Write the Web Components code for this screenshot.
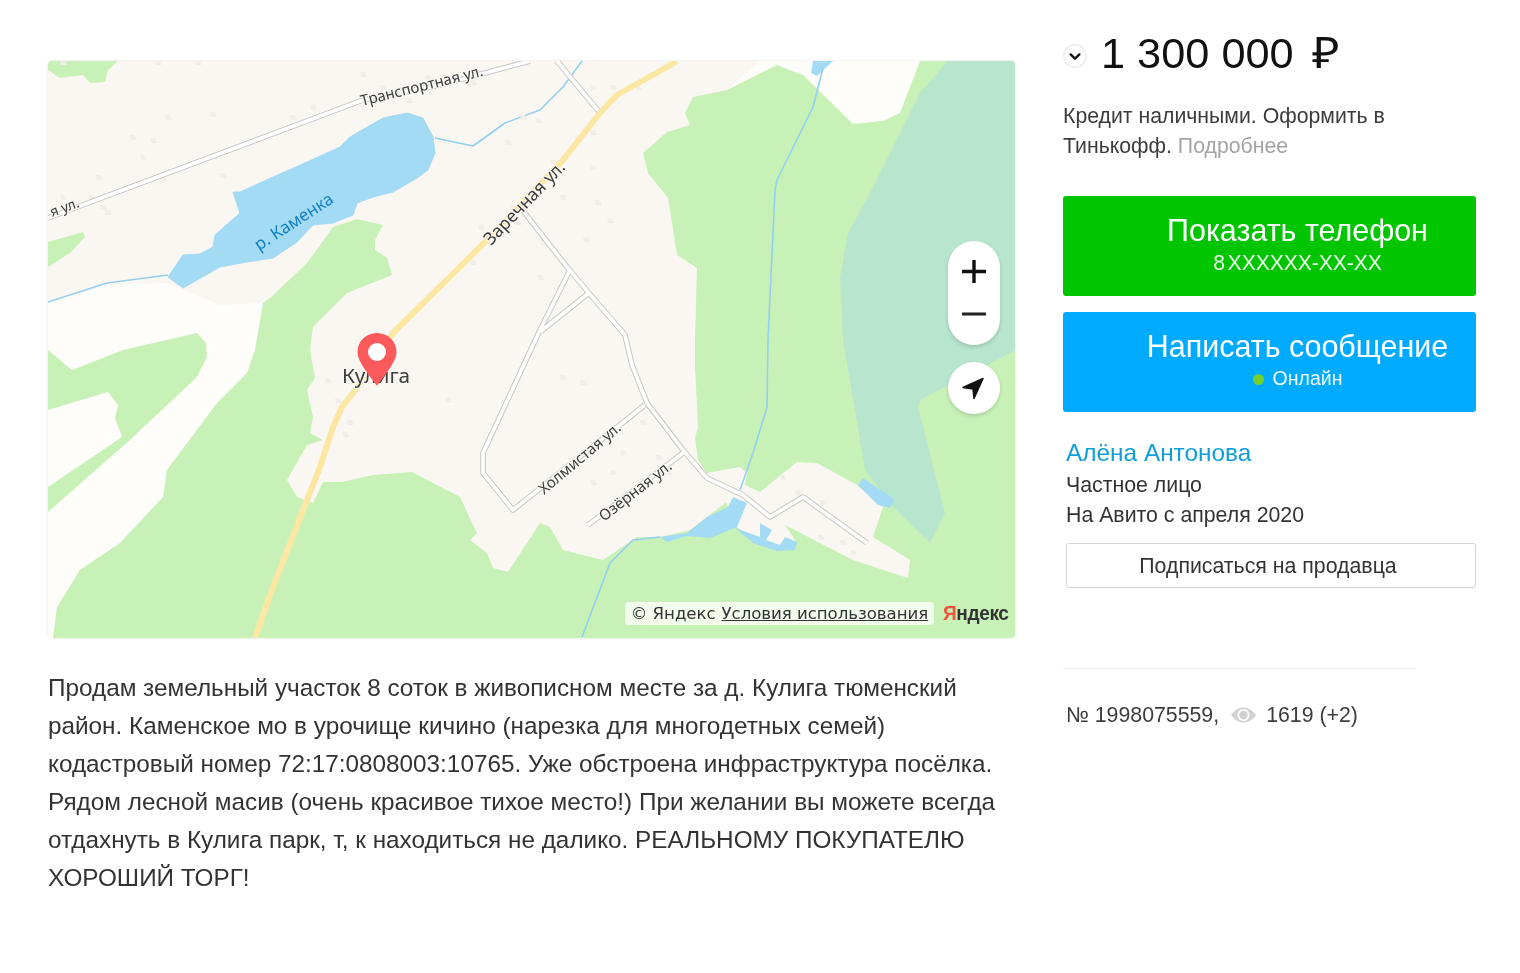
<!DOCTYPE html>
<html lang="ru"><head><meta charset="utf-8"><title>Объявление</title>
<style>html,body{margin:0;background:#fff}body{font-family:"Liberation Sans",Arial,sans-serif}</style>
</head><body>
<ad-page>
  <ad-map slot="map"></ad-map>
  <ad-desc slot="desc">Продам земельный участок 8 соток в живописном месте за д. Кулига тюменский<br>район. Каменское мо в урочище кичино (нарезка для многодетных семей)<br>кодастровый номер 72:17:0808003:10765. Уже обстроена инфраструктура посёлка.<br>Рядом лесной масив (очень красивое тихое место!) При желании вы можете всегда<br>отдахнуть в Кулига парк, т, к находиться не далико. РЕАЛЬНОМУ ПОКУПАТЕЛЮ<br>ХОРОШИЙ ТОРГ!</ad-desc>
  <ad-price slot="side" value="1 300 000" cur="₽"></ad-price>
  <ad-credit slot="side"></ad-credit>
  <ad-btn slot="side" color="#00c500" style="margin-top:35px"><span>Показать телефон</span><span slot="sub" style="display:inline-block;padding-top:2px;font-size:21.2px;line-height:24px;word-spacing:-3px;letter-spacing:-.1px">8 XXXXXX-XX-XX</span></ad-btn>
  <ad-btn slot="side" color="#00aaff" style="margin-top:16px"><span>Написать сообщение</span><span slot="sub"><i style="display:inline-block;width:11px;height:11px;border-radius:50%;background:#7ed321;margin-right:9px"></i>Онлайн</span></ad-btn>
  <ad-seller slot="side"></ad-seller>
  <ad-stats slot="side"></ad-stats>
</ad-page>
<script>
function def(name, css, html){
  customElements.define(name, class extends HTMLElement{
    connectedCallback(){
      if(this.shadowRoot) return;
      const r=this.attachShadow({mode:"open"});
      r.innerHTML="<style>"+css+"</style>"+(typeof html==="function"?html(this):html);
    }
  });
}
def("ad-page",
`:host{display:grid;grid-template-columns:967px 413px;column-gap:48px;padding:0 44px 0 48px;width:1428px;color:#333;filter:blur(.3px)}
.l{padding-top:61px}.r{padding-top:30px}`,
`<div class="l"><slot name="map"></slot><slot name="desc"></slot></div><div class="r"><slot name="side"></slot></div>`);

def("ad-desc",
`:host{display:block;margin-top:31px;font-size:24.3px;line-height:38px;color:#333;white-space:nowrap}`,
`<slot></slot>`);

def("ad-price",
`:host{display:flex;align-items:center;gap:14px;height:46px;color:#111}
.c{width:24px;height:24px;flex:none;margin-top:6px}
.v{font-size:43.300px;line-height:46px;white-space:nowrap}
.u{display:inline-block;margin-left:18px;transform:scaleX(1.1);transform-origin:0 50%}`,
h=>`<svg class="c" viewBox="0 0 24 24"><circle cx="12" cy="12" r="11.2" fill="#fff" stroke="#ececec" stroke-width="1.4"/><path d="M7.6 10.4 12 14.6l4.4-4.2" fill="none" stroke="#111" stroke-width="2.4" stroke-linecap="round" stroke-linejoin="round"/></svg><div class="v">${h.getAttribute("value")}<span class="u">${h.getAttribute("cur")}</span></div>`);

def("ad-credit",
`:host{display:block;margin-top:25px;font-size:21.26px;line-height:30px;color:#3c3c3c;white-space:nowrap}
a{color:#a4a4a4}`,
`Кредит наличными. Оформить в<br>Тинькофф. <a>Подробнее</a>`);

def("ad-btn",
`:host{display:flex;flex-direction:column;align-items:center;justify-content:center;height:100px;border-radius:3px;color:#fff;text-align:center;box-sizing:border-box;padding-bottom:5px}
.m{font-size:30.450px;line-height:36px;white-space:nowrap;margin-left:56px}
.s{font-size:19.5px;line-height:26px;white-space:nowrap;opacity:.93;margin-left:56px;margin-top:1px}`,
h=>{h.style.background=h.getAttribute("color");
 return `<div class="m"><slot></slot></div><div class="s"><slot name="sub"></slot></div>`});

def("ad-seller",
`:host{display:block;padding-left:3px;margin-top:24px;font-size:21.3px;line-height:30px;color:#333;white-space:nowrap}
.n{font-size:24.4px;line-height:34px;color:#0f9fd8}
.b{display:flex;align-items:center;justify-content:center;margin-top:13px;height:45px;box-sizing:border-box;border:1.5px solid #d4d4d4;border-radius:3px;padding-right:6px}`,
`<div class="n">Алёна Антонова</div><div>Частное лицо</div><div>На Авито с апреля 2020</div><div class="b">Подписаться на продавца</div>`);

def("ad-stats",
`:host{display:block;margin-top:80px;width:349px;border-top:1.5px solid #eee;padding:31px 0 0 3px;font-size:21.3px;line-height:30px;color:#3c3c3c;white-space:nowrap}
.f{display:flex;align-items:center}
svg{width:27px;height:18px;margin:0 9px 0 11px}`,
`<div class="f"><span>№ 1998075559,</span><svg viewBox="0 0 27 18"><path d="M1 9C5 3.5 9 1.5 13.500 1.500S22 3.500 26 9c-4 5.500-8 7.500-12.500 7.500S5 14.500 1 9Z" fill="#d2d2d2"/><circle cx="13.500" cy="9" r="6" fill="#fff"/><circle cx="13.500" cy="9" r="4.200" fill="#cfcfcf"/></svg><span>1619 (+2)</span></div>`);

const specks=[[60,60],[155,60],[195,60],[360,72],[380,85],[310,105],[290,115],[210,112],[165,115],[130,135],[95,175],[150,138],[60,195],[100,205],[105,210],[88,195],[140,155],[160,176],[220,173],[425,75],[445,80],[470,80],[406,98],[520,115],[535,118],[505,140],[590,85],[610,85],[635,85],[575,135],[590,130],[590,165],[560,195],[595,200],[607,218],[583,237],[550,160],[470,260],[540,240],[537,275],[515,220],[510,205],[478,225],[325,378],[335,398],[347,420],[342,432],[445,398],[560,375],[580,380],[640,420],[620,450],[610,470],[590,480],[655,455],[665,470],[780,475],[795,490],[820,500],[840,540],[850,550],[818,535]];
const spk=specks.map(p=>`M${p[0]} ${p[1]}h5l2 5h-6z`).join("");
const cas=(d,w=5.6)=>`<path d="${d}" fill="none" stroke="#c9c6c2" stroke-width="${w}" stroke-linejoin="round"/>`;
const inn=(d,w=3.6)=>`<path d="${d}" fill="none" stroke="#fff" stroke-width="${w}" stroke-linejoin="round"/>`;
const roads=[
 "M48 218 363 100 440 85 530 61",
 "M557 61 600 113",
 "M520 207 567 267 588 292 625 335 632 365 647 403 683 450 707 478 743 495 770 517 803 497 867 543",
 "M570 270 540 330 483 453 483 473 513 510 645 405",
 "M590 292 540 332",
 "M588 525 683 453"];
def("ad-map",
`:host{display:block;position:relative;width:967px;height:577px;border-radius:4px;overflow:hidden;box-shadow:0 0 2px rgba(0,0,0,.18)}
svg.m{display:block;width:967px;height:577px}
text{font-family:"Noto Sans","Liberation Sans",sans-serif;fill:#3d3d3d;paint-order:stroke;stroke:#faf7f2;stroke-width:2.5px;stroke-linejoin:round}
.zoom{position:absolute;left:900px;top:180px;width:52px;height:104px;border-radius:26px;background:#fff;box-shadow:0 2px 4px rgba(0,0,0,.15)}
.loc{position:absolute;left:900px;top:301px;width:52px;height:52px;border-radius:50%;background:#fff;box-shadow:0 2px 4px rgba(0,0,0,.15)}
.zoom svg,.loc svg{display:block;position:absolute;left:0;top:0}
.pin{position:absolute;left:308px;top:272px;width:42px;height:54px}
.copy{position:absolute;left:577px;top:541px;width:309px;height:23px;border-radius:4px;background:rgba(255,255,255,.75);display:flex;align-items:center;justify-content:center;font:16.600px "DejaVu Sans",sans-serif;color:#333;white-space:nowrap;letter-spacing:-.05px}
.copy u{margin-left:6px}
.ya{position:absolute;left:895px;top:539px;font:bold 20.500px/26px "Liberation Sans",sans-serif;color:#333;letter-spacing:-.4px;white-space:nowrap;transform:scaleX(.93);transform-origin:0 50%}
.ya b{color:#f2533d}`,
`<svg class="m" viewBox="48 61 967 577">
<rect x="48" y="61" width="968" height="577" fill="#faf7f2"/>
<g fill="#fefdf9">
<path d="M48 302 110 285 168 283 220 305 263 303 255 350 247 373 217 403 167 470 163 497 120 543 80 570 57 607 53 638H48Z"/>
<path d="M760 61H920L900 113 883 121 853 124 803 75 777 65 727 90Z"/>
<path d="M695 367 720 373V423L698 427Z"/>
</g>
<g fill="#c8f1b7">
<path d="M48 61H118L108 70 105 82 90 83 83 75 60 78 48 70Z"/>
<path d="M48 242 83 232 85 237 70 253 48 267Z"/>
<path d="M48 350 72 370 123 350 197 333 206 343 207 357 197 377 130 440 48 512V487L122 437 115 418 118 405 108 392 48 410Z"/>
<path d="M357 219 383 225 375 240 375 250 387 258 392 275 347 293 313 327 310 350 315 378 307 390 313 417 310 433 323 440 307 445 287 480 297 497 313 503 323 482 342 482 373 475 412 472 460 497 477 533 470 540 487 553 493 568 508 572 540 523 550 527 563 550 603 560 637 537 660 537 690 530 733 497 708 475 698 460 695 438 698 427 695 367 695 340 697 268 677 255 668 198 648 173 643 153 667 132 690 125 685 113 693 97 727 90 777 65 803 75 853 124 883 121 900 113 920 61H1016V638H53L57 607 80 570 120 543 163 497 167 470 217 403 247 373 255 350 263 303 270 298 307 263 333 227Z"/>
</g>
<path d="M948 61H1016V350L920 400 918 407 945 513 930 543 893 507 865 470 843 340 840 277 848 233 870 193 920 93Z" fill="#b7e5ce"/>
<path d="M707 473 740 467 747 473 745 485 760 492 797 462 817 463 857 485 883 507 873 537 910 560 908 578 853 560 785 525 795 540 790 545 763 545 737 527 725 500Z" fill="#faf7f2"/>
<g fill="#a3daf4">
<path d="M168 277 183 255 200 254 213 247 215 235 240 213 233 192 240 192 273 177 307 162 340 147 350 137 383 118 407 113 423 118 433 137 435 153 428 170 417 178 393 192 373 197 357 203 353 215 333 223 313 225 297 242 273 258 247 262 220 267 183 288Z" stroke="#a3daf4" stroke-width="1" stroke-linejoin="round"/>
<path d="M863 478 895 500 890 508 878 505 858 485Z"/>
<path d="M660 537 687 533 707 517 728 507 733 497 747 503 737 527 710 538 687 536 667 542Z"/>
<path d="M735 528 760 537 760 523 772 530 766 540 780 545 785 537 797 542 795 550 777 551 753 543Z"/>
<path d="M813 61H833L817 76 811 73Z"/>
</g>
<g fill="none" stroke="#93d0ef" stroke-width="1.600" stroke-linejoin="round">
<path d="M48 302 107 283 168 275"/>
<path d="M435 138 473 146 505 123 540 110 563 87 582 61"/>
<path d="M823 68 813 107 777 180 775 190 768 340 767 407 753 453 740 490"/>
<path d="M660 537 633 540 610 563 582 637"/>
</g>
<path d="${spk}" fill="#f1eee9"/>
${roads.map(d=>cas(d)).join("")}${roads.map(d=>inn(d)).join("")}
<path d="M255 638 273 587 307 500 320 467 333 427 342 407 357 388 393 333 487 240 563 160 600 113 617 95 667 67 677 61" fill="none" stroke="#fce7a2" stroke-width="6" stroke-linejoin="round"/>
<text x="362" y="106" font-size="15" transform="rotate(-14 362 106)">Транспортная ул.</text>
<text x="52" y="217" font-size="14" transform="rotate(-20 52 217)">я ул.</text>
<text x="259" y="251" font-size="17" style="fill:#1380c4;stroke:none" transform="rotate(-33 259 251)">р. Каменка</text>
<text x="491" y="246" font-size="17.500" transform="rotate(-46 491 246)">Заречная ул.</text>
<text x="342" y="383" font-size="20.800">Кулига</text>
<text x="544" y="495" font-size="15" transform="rotate(-40 544 495)">Холмистая ул.</text>
<text x="604" y="522" font-size="15.300" transform="rotate(-38 604 522)">Озёрная ул.</text>
</svg>
<svg class="pin" viewBox="0 0 42 54"><path d="M21 0C10 0 1.500 8.500 1.500 19 1.500 29 14 43 21 53 28 43 40.500 29 40.500 19 40.500 8.500 32 0 21 0Z" fill="#fb5a5d"/><circle cx="21" cy="19" r="9" fill="#fff"/></svg>
<div class="zoom"><svg width="52" height="104" viewBox="0 0 52 104"><path d="M26 19V42M14 30.500H38" stroke="#111" stroke-width="3.400" fill="none"/><path d="M14 73H38" stroke="#222" stroke-width="3.200"/></svg></div>
<div class="loc"><svg width="52" height="52" viewBox="0 0 52 52"><path d="M15 25.500 35 16.500 26 36.500 25 27Z" fill="#111" stroke="#111" stroke-linejoin="round" stroke-width="1.500"/></svg></div>
<div class="copy"><span>© Яндекс</span><u>Условия использования</u></div>
<div class="ya"><b>Я</b>ндекс</div>`);
</script>
</body></html>
